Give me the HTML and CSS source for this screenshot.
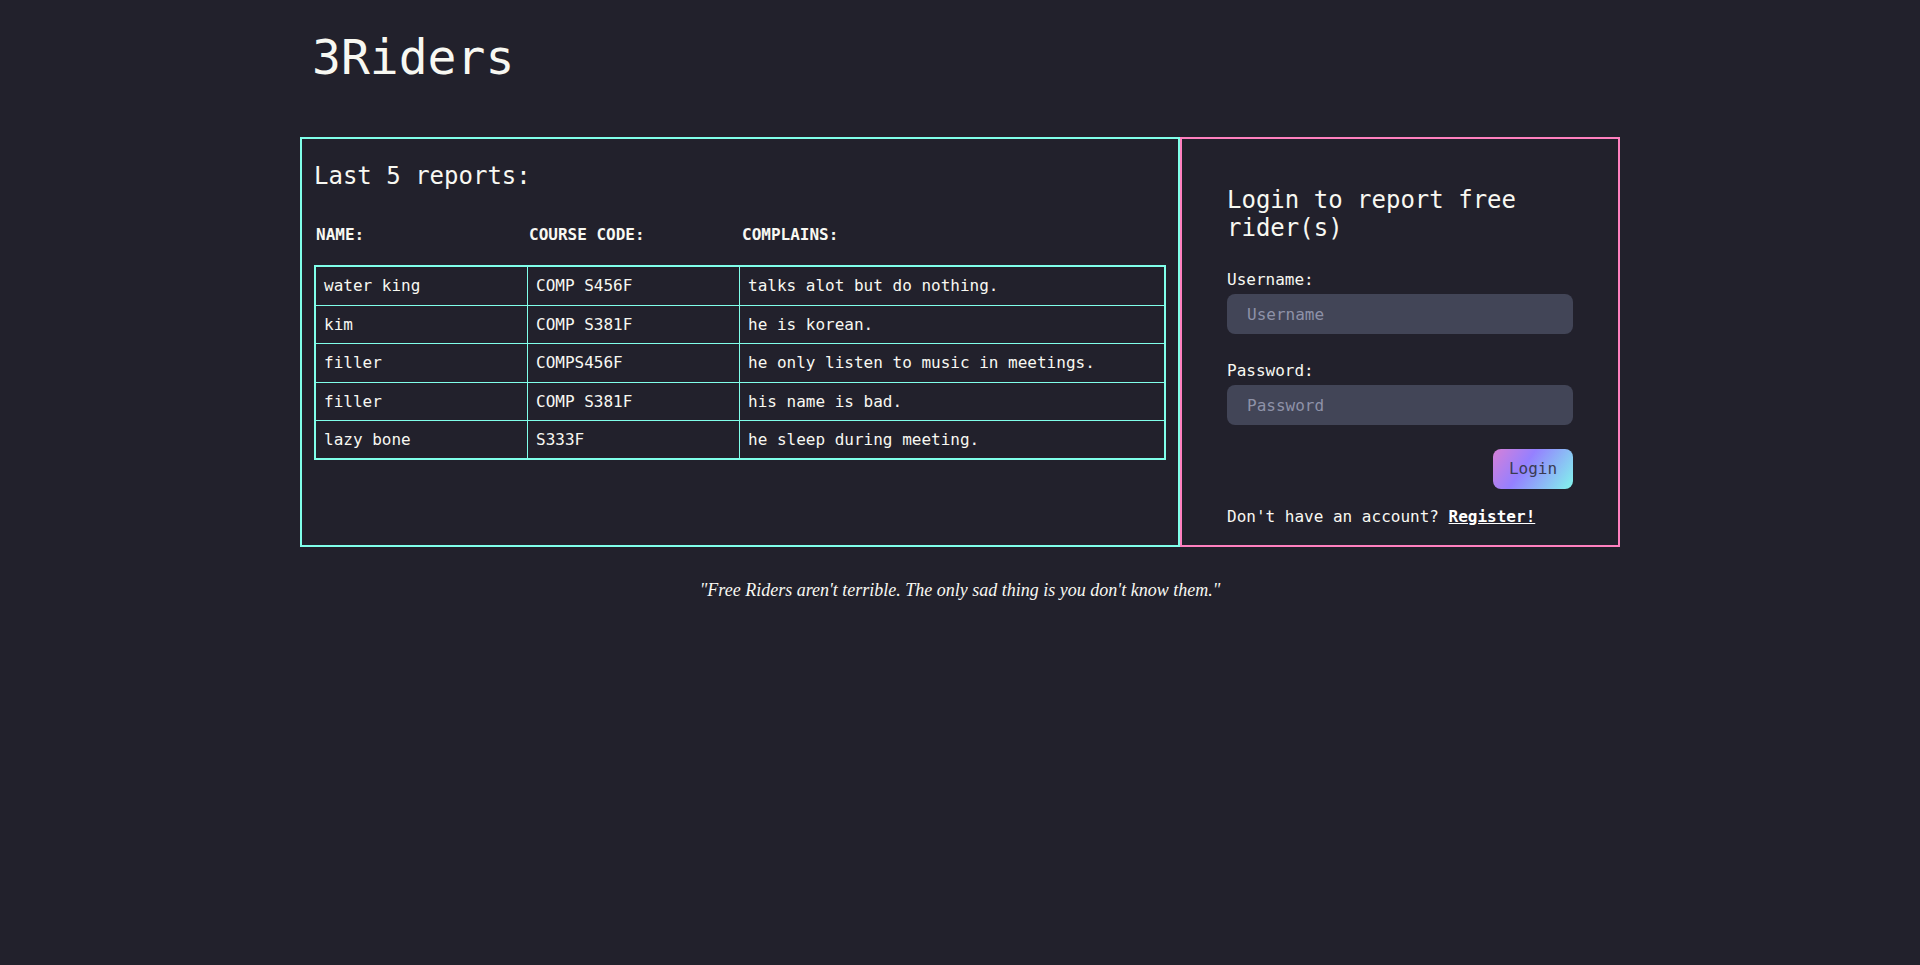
FILE: index.html
```html
<!DOCTYPE html>
<html lang="en">
<head>
<meta charset="utf-8">
<title>3Riders</title>
<link rel="stylesheet" href="styles.css">
</head>
<body>
<div class="container">
  <h1 class="brand">3Riders</h1>
  <div class="panels">
    <section class="reports">
      <h2 class="panel-title">Last 5 reports:</h2>
      <div class="report-head">
        <span>NAME:</span>
        <span>COURSE CODE:</span>
        <span>COMPLAINS:</span>
      </div>
      <table class="report-table">
        <colgroup>
          <col class="c-name"><col class="c-code"><col class="c-text">
        </colgroup>
        <tbody>
          <tr><td>water king</td><td>COMP S456F</td><td>talks alot but do nothing.</td></tr>
          <tr><td>kim</td><td>COMP S381F</td><td>he is korean.</td></tr>
          <tr><td>filler</td><td>COMPS456F</td><td>he only listen to music in meetings.</td></tr>
          <tr><td>filler</td><td>COMP S381F</td><td>his name is bad.</td></tr>
          <tr><td>lazy bone</td><td>S333F</td><td>he sleep during meeting.</td></tr>
        </tbody>
      </table>
    </section>
    <section class="login">
      <h2 class="login-title">Login to report free rider(s)</h2>
      <form class="login-form">
        <label class="field-label" for="username">Username:</label>
        <input class="field-input" id="username" type="text" placeholder="Username">
        <label class="field-label second" for="password">Password:</label>
        <input class="field-input" id="password" type="password" placeholder="Password">
        <div class="actions">
          <button class="login-btn" type="button">Login</button>
        </div>
      </form>
      <p class="register">Don't have an account? <a class="register-link" href="#">Register!</a></p>
    </section>
  </div>
  <p class="quote"><em>"Free Riders aren't terrible. The only sad thing is you don't know them."</em></p>
</div>
</body>
</html>
```
FILE: styles.css
```css
* { box-sizing: border-box; }

html, body {
  margin: 0;
  padding: 0;
  background: #22212c;
  color: #f8f8f2;
  font-family: "DejaVu Sans Mono", "Liberation Mono", monospace;
  font-size: 16px;
  line-height: 24px;
}

.container {
  width: 1320px;
  margin: 0 auto;
}

.brand {
  margin: 29px 0 0 12px;
  font-size: 48px;
  line-height: 57.6px;
  font-weight: normal;
  color: #f8f8f2;
}

.panels {
  display: flex;
  margin-top: 50px;
}

.reports {
  flex: 0 0 880px;
  border: 2px solid #80ffea;
  padding: 12px;
}

.panel-title {
  margin: 11px 0 0 0;
  font-size: 24px;
  line-height: 28.8px;
  font-weight: normal;
}

.report-head {
  display: grid;
  grid-template-columns: 213px 213px 1fr;
  padding-left: 2px;
  margin-top: 33px;
  font-weight: bold;
  line-height: 24px;
}

.report-table {
  width: 100%;
  margin-top: 18px;
  border: 2px solid #80ffea;
  border-spacing: 0;
  table-layout: fixed;
}

.c-name, .c-code { width: 25%; }
.c-text { width: 50%; }

.report-table td {
  padding: 7px 8px;
  line-height: 23.4px;
  border-right: 1px solid #80ffea;
  border-bottom: 1px solid #80ffea;
  white-space: nowrap;
}

.report-table td:last-child { border-right: none; }
.report-table tr:last-child td { border-bottom: none; }

.login {
  flex: 0 0 440px;
  border: 2px solid #ff80bf;
  padding: 47px 45px 16px 45px;
}

.login-title {
  margin: 0;
  font-size: 24px;
  line-height: 28.8px;
  font-weight: normal;
}

.login-form {
  display: flex;
  flex-direction: column;
  margin-top: 25px;
}

.field-label {
  display: block;
  line-height: 24px;
}

.field-label.second { margin-top: 25px; }

.field-input {
  margin-top: 2px;
  width: 100%;
  height: 40px;
  border: none;
  border-radius: 8px;
  background: #424557;
  color: #f8f8f2;
  padding: 0 20px;
  font-family: inherit;
  font-size: 16px;
  outline: none;
}

.field-input::placeholder { color: #8e92a8; }

.actions {
  display: flex;
  justify-content: flex-end;
  margin-top: 23.5px;
}

.login-btn {
  width: 80px;
  height: 40px;
  border: none;
  border-radius: 8px;
  background: linear-gradient(125deg, #ff80bf -25%, #9580ff 40%, #80ffea 105%);
  color: #3a3c52;
  font-family: inherit;
  font-size: 16px;
  padding: 0;
}

.register {
  margin: 16px 0 0 0;
  line-height: 24px;
}

.register-link {
  color: #ffffff;
  font-weight: bold;
  text-decoration: underline;
}

.quote {
  margin: 33px 0 0 0;
  text-align: center;
  font-family: "Liberation Serif", "Times New Roman", serif;
  font-size: 18px;
  line-height: normal;
}
```
